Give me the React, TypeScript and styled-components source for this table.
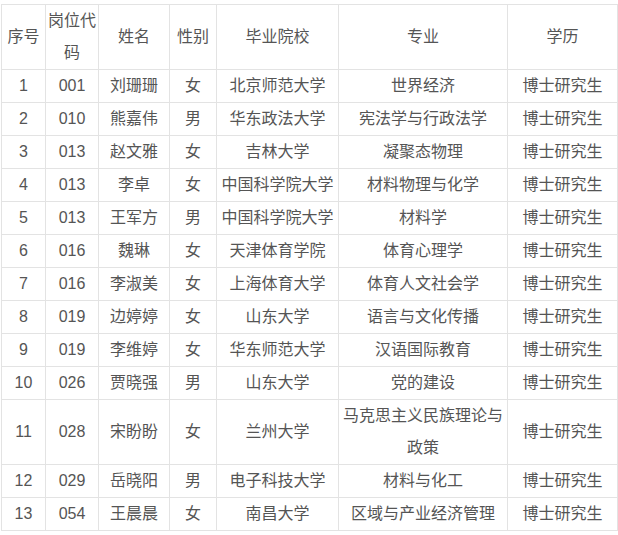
import React from 'react';
import styled, { createGlobalStyle } from 'styled-components';

const GlobalStyle = createGlobalStyle`
    body {
        margin: 0;
        background: #fff;
        font-family: "Liberation Sans", "Noto Sans CJK SC", sans-serif;
    }
`

const Wrap = styled.div`
    padding: 4px 0 0 1px;
`

const Table = styled.table`
    border-collapse: collapse;
    table-layout: fixed;
    width: 616px;
    color: #555;
    font-size: 16px;
`

const Cell = styled.td`
    border: 1px solid #e3e3e3;
    padding: 0 2px;
    line-height: 32px;
    text-align: center;
    vertical-align: middle;
    word-break: break-all;
`

const HeadCell = styled(Cell).attrs({ as: 'th' })`
    font-weight: normal;
`

// column widths, taken from the grid lines
const widths = [44, 53, 71, 47, 122, 169, 110]

const head = ['序号', '岗位代码', '姓名', '性别', '毕业院校', '专业', '学历']

const rows: string[][] = [
    ['1', '001', '刘珊珊', '女', '北京师范大学', '世界经济'],
    ['2', '010', '熊嘉伟', '男', '华东政法大学', '宪法学与行政法学'],
    ['3', '013', '赵文雅', '女', '吉林大学', '凝聚态物理'],
    ['4', '013', '李卓', '女', '中国科学院大学', '材料物理与化学'],
    ['5', '013', '王军方', '男', '中国科学院大学', '材料学'],
    ['6', '016', '魏琳', '女', '天津体育学院', '体育心理学'],
    ['7', '016', '李淑美', '女', '上海体育大学', '体育人文社会学'],
    ['8', '019', '边婷婷', '女', '山东大学', '语言与文化传播'],
    ['9', '019', '李维婷', '女', '华东师范大学', '汉语国际教育'],
    ['10', '026', '贾晓强', '男', '山东大学', '党的建设'],
    ['11', '028', '宋盼盼', '女', '兰州大学', '马克思主义民族理论与政策'],
    ['12', '029', '岳晓阳', '男', '电子科技大学', '材料与化工'],
    ['13', '054', '王晨晨', '女', '南昌大学', '区域与产业经济管理'],
]

const App = () => {
    return (
        <Wrap>
            <GlobalStyle />
            <Table>
                <colgroup>
                    {widths.map((w, i) => <col key={i} style={{ width: w }} />)}
                </colgroup>
                <thead>
                    <tr>
                        {head.map(h => <HeadCell key={h}>{h}</HeadCell>)}
                    </tr>
                </thead>
                <tbody>
                    {rows.map(r => (
                        <tr key={r[0]}>
                            {r.map((c, i) => <Cell key={i}>{c}</Cell>)}
                            <Cell>博士研究生</Cell>
                        </tr>
                    ))}
                </tbody>
            </Table>
        </Wrap>
    )
}

export default App;
